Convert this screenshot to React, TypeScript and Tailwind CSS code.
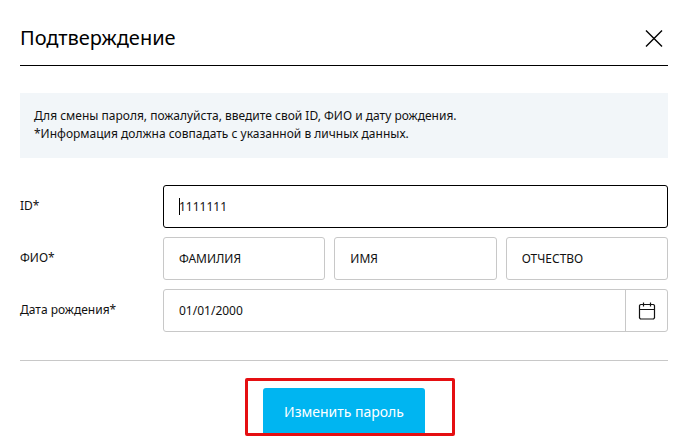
import { useState } from "react";

const inputClass =
  "h-[43px] w-full min-w-0 rounded-[3px] border border-[#c8c8c8] bg-white px-[15px] text-[12px] text-[#111] outline-none";

const labelClass = "w-[143px] shrink-0 pb-0.5 text-[12px]";

const nameFields = [
  { id: "lastName", label: "Фамилия", value: "ФАМИЛИЯ" },
  { id: "firstName", label: "Имя", value: "ИМЯ" },
  { id: "middleName", label: "Отчество", value: "ОТЧЕСТВО" },
];

function CloseIcon() {
  return (
    <svg width="18" height="18" viewBox="0 0 18 18" fill="none" stroke="#000" strokeWidth="1.4">
      <path d="M1 1.5l16 16M17 1.5L1 17.5" />
    </svg>
  );
}

function CalendarIcon() {
  return (
    <svg width="18" height="18" viewBox="0 0 18 18" fill="none" stroke="#111" strokeWidth="1.2">
      <path d="M2.5 2.5h13M1.5 3.5v12.5M16.5 3.5v12.5M2.5 17h13M1.5 7.5h15" />
      <path d="M1.5 4q0-1.5 1.5-1.5M15 2.5q1.5 0 1.5 1.5M1.5 15.5q0 1.5 1.5 1.5M15 17q1.5 0 1.5-1.5" />
      <path d="M5.5 0.5v4M12.5 0.5v4" />
    </svg>
  );
}

export default function App() {
  const [id, setId] = useState("1111111");
  const [birthDate, setBirthDate] = useState("01/01/2000");

  return (
    <main className="bg-white pt-5 pr-[26px] pb-[13px] pl-5 font-['Noto_Sans','Open_Sans',sans-serif] text-[#111]">
      <header className="flex h-[46px] items-start justify-between border-b border-black">
        <h1 className="text-[20px] leading-9 text-black">Подтверждение</h1>
        <button type="button" aria-label="Закрыть" className="mr-[5px] flex h-9 items-center">
          <CloseIcon />
        </button>
      </header>

      <div className="mt-[27px] bg-[#f2f6f9] px-[14px] pt-[14px] pb-[15px] text-[12px] leading-[18px]">
        <p>Для смены пароля, пожалуйста, введите свой ID, ФИО и дату рождения.</p>
        <p>*Информация должна совпадать с указанной в личных данных.</p>
      </div>

      <form className="mt-[27px]" onSubmit={(e) => e.preventDefault()}>
        <div className="flex flex-col gap-[9px] border-b border-[#c8c8c8] pb-7">
          <div className="flex items-center">
            <label htmlFor="userId" className={labelClass}>
              ID*
            </label>
            <div className="relative flex-1">
              <input
                id="userId"
                value={id}
                onChange={(e) => setId(e.target.value)}
                className="h-[43px] w-full rounded-[3px] border border-black bg-white px-[15px] text-[12px] text-[#111] outline-none"
              />
              {/* text cursor */}
              <span className="absolute top-[13px] left-4 h-[17px] w-px bg-black" />
            </div>
          </div>

          <div className="flex items-center">
            <label htmlFor="lastName" className={labelClass}>
              ФИО*
            </label>
            <div className="grid flex-1 grid-cols-3 gap-[9px]">
              {nameFields.map((field) => (
                <input
                  key={field.id}
                  id={field.id}
                  aria-label={field.label}
                  defaultValue={field.value}
                  className={inputClass}
                />
              ))}
            </div>
          </div>

          <div className="flex items-center">
            <label htmlFor="birthDate" className={labelClass}>
              Дата рождения*
            </label>
            <div className="flex h-[43px] flex-1 rounded-[3px] border border-[#c8c8c8]">
              <input
                id="birthDate"
                value={birthDate}
                onChange={(e) => setBirthDate(e.target.value)}
                className="min-w-0 flex-1 bg-transparent px-[15px] text-[12px] text-[#111] outline-none"
              />
              <button
                type="button"
                aria-label="Выбрать дату"
                className="flex w-[42px] items-center justify-center border-l border-[#c8c8c8]"
              >
                <CalendarIcon />
              </button>
            </div>
          </div>
        </div>

        <div className="mt-[27px] flex justify-center">
          <div className="relative">
            <button
              type="submit"
              className="h-[46px] w-[162px] rounded-t-[3px] bg-[#00b5f1] text-[14px] text-white"
            >
              Изменить пароль
            </button>
            {/* highlight frame around the button */}
            <div className="pointer-events-none absolute -top-[10px] -right-[30px] -bottom-[2px] -left-[18px] rounded-xs border-3 border-[#e50f12]" />
          </div>
        </div>
      </form>
    </main>
  );
}
